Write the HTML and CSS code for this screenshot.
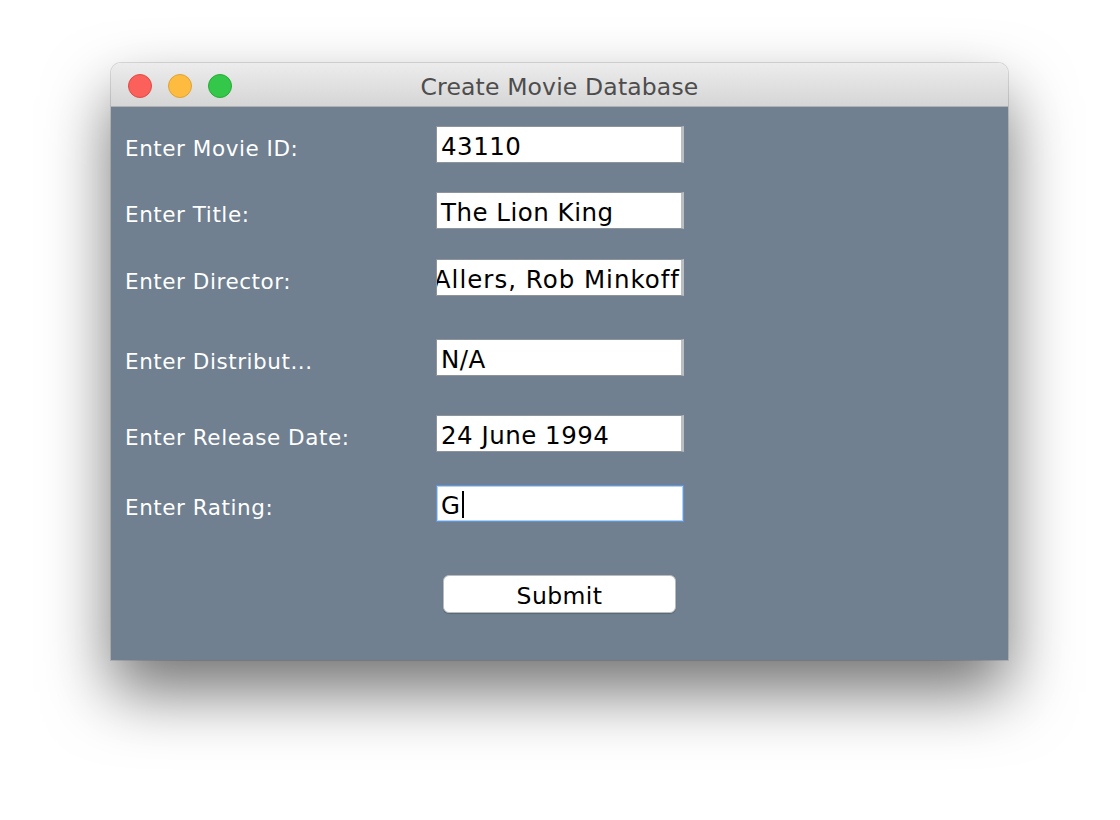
FILE: index.html
```html
<!DOCTYPE html>
<html>
<head>
<meta charset="utf-8">
<title>Create Movie Database</title>
<link rel="stylesheet" href="styles.css">
</head>
<body>
<div class="window">
  <div class="titlebar">
    <div class="lights">
      <span class="light red"></span>
      <span class="light yellow"></span>
      <span class="light green"></span>
    </div>
    <div class="title">Create Movie Database</div>
  </div>
  <div class="content">
    <div class="row">
      <div class="label">Enter Movie ID:</div>
      <div class="field"><span>43110</span></div>
    </div>
    <div class="row gap-29">
      <div class="label">Enter Title:</div>
      <div class="field"><span>The Lion King</span></div>
    </div>
    <div class="row gap-30">
      <div class="label">Enter Director:</div>
      <div class="field scrolled"><span>Allers, Rob Minkoff</span></div>
    </div>
    <div class="row gap-43">
      <div class="label">Enter Distribut...</div>
      <div class="field"><span>N/A</span></div>
    </div>
    <div class="row gap-39">
      <div class="label">Enter Release Date:</div>
      <div class="field"><span>24 June 1994</span></div>
    </div>
    <div class="row gap-33">
      <div class="label">Enter Rating:</div>
      <div class="field focused"><span>G</span><span class="caret"></span></div>
    </div>
    <div class="row gap-53">
      <div class="label"></div>
      <button class="submit">Submit</button>
    </div>
  </div>
</div>
</body>
</html>
```

FILE: styles.css
```css
html, body {
  margin: 0;
  padding: 0;
  background: #ffffff;
}

body {
  width: 1120px;
  height: 820px;
  overflow: hidden;
  padding: 63px 0 0 111px;
  box-sizing: border-box;
  font-family: "DejaVu Sans", "Liberation Sans", sans-serif;
}

.window {
  width: 897px;
  height: 597px;
  border-radius: 10px 10px 0 0;
  display: flex;
  flex-direction: column;
  box-shadow: 0 32px 65px rgba(0, 0, 0, 0.55), 0 0 0 1px rgba(0, 0, 0, 0.12);
  overflow: hidden;
}

.titlebar {
  height: 43px;
  flex: none;
  background: linear-gradient(#ececec, #d6d6d6);
  border-bottom: 1px solid #b1b1b1;
  display: flex;
  align-items: center;
  position: relative;
}

.lights {
  display: flex;
  gap: 16px;
  padding-left: 17px;
  padding-top: 2px;
}

.light {
  width: 24px;
  height: 24px;
  border-radius: 50%;
  box-sizing: border-box;
}

.red { background: #fc605b; border: 1px solid #de4a44; }
.yellow { background: #fdbc40; border: 1px solid #dea236; }
.green { background: #34c84a; border: 1px solid #27aa35; }

.title {
  position: absolute;
  left: 0;
  right: 0;
  top: 0;
  bottom: 0;
  display: flex;
  align-items: center;
  justify-content: center;
  font-size: 23.5px;
  letter-spacing: 0.15px;
  color: #4d4d4d;
  padding-top: 5px;
}

.content {
  flex: 1;
  background: #708090;
  padding: 19px 0 0 14px;
}

.row {
  display: grid;
  grid-template-columns: 311px 248px;
  align-items: center;
  height: 37px;
}

.gap-29 { margin-top: 29px; }
.gap-30 { margin-top: 30px; }
.gap-43 { margin-top: 43px; }
.gap-39 { margin-top: 39px; }
.gap-33 { margin-top: 33px; }
.gap-53 { margin-top: 53px; }

.label {
  color: #ffffff;
  font-size: 21.5px;
  letter-spacing: 0.55px;
  padding-top: 7px;
}

.field {
  height: 37px;
  box-sizing: border-box;
  background: #ffffff;
  border: 1px solid #8e949b;
  border-right: 3px solid #b9bec3;
  display: flex;
  align-items: center;
  padding-left: 4px;
  padding-top: 4px;
  font-size: 24.5px;
  letter-spacing: 0.5px;
  color: #000000;
  white-space: nowrap;
  overflow: hidden;
}

.field.scrolled {
  justify-content: flex-end;
  padding-right: 1px;
  padding-left: 0;
  letter-spacing: 1px;
}

.field.focused {
  border: 1px solid #5f96d8;
  box-shadow: inset 0 0 0 1px #b6d0ee;
}

.caret {
  display: inline-block;
  width: 2px;
  height: 27px;
  background: #000000;
  margin-left: 1px;
  margin-top: -3px;
}

.submit {
  grid-column: 2;
  margin-left: 7px;
  width: 233px;
  height: 38px;
  border: 1px solid #b8bcc1;
  border-radius: 6px;
  background: #ffffff;
  font-family: "DejaVu Sans", "Liberation Sans", sans-serif;
  font-size: 23.5px;
  letter-spacing: 0.4px;
  color: #000000;
  padding: 3px 0 0 0;
  box-shadow: 0 1px 1px rgba(0, 0, 0, 0.2);
}
```
